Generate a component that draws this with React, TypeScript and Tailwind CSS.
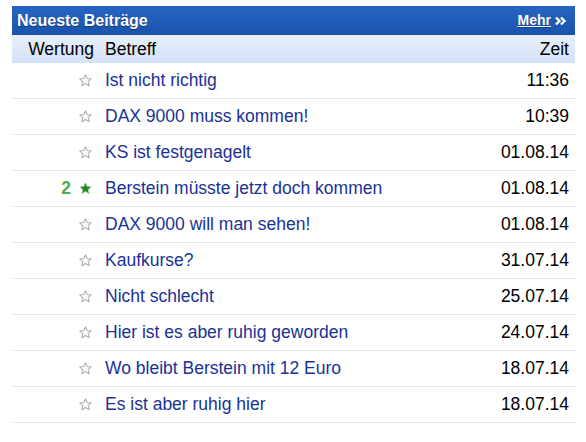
import React from "react";

const rows: { score?: string; title: string; time: string }[] = [
  { title: "Ist nicht richtig", time: "11:36" },
  { title: "DAX 9000 muss kommen!", time: "10:39" },
  { title: "KS ist festgenagelt", time: "01.08.14" },
  { score: "2", title: "Berstein müsste jetzt doch kommen", time: "01.08.14" },
  { title: "DAX 9000 will man sehen!", time: "01.08.14" },
  { title: "Kaufkurse?", time: "31.07.14" },
  { title: "Nicht schlecht", time: "25.07.14" },
  { title: "Hier ist es aber ruhig geworden", time: "24.07.14" },
  { title: "Wo bleibt Berstein mit 12 Euro", time: "18.07.14" },
  { title: "Es ist aber ruhig hier", time: "18.07.14" },
];

const STAR = "M6 0.7 L7.6 4.1 L11.3 4.5 L8.5 7 L9.4 10.8 L6 8.8 L2.6 10.8 L3.5 7 L0.7 4.5 L4.4 4.1 Z";

function Star({ filled }: { filled?: boolean }) {
  return (
    <svg width="13" height="13" viewBox="0 0 12 12" className="shrink-0">
      {filled ? (
        <path d={STAR} fill="#2a7d2a" stroke="#9ad69a" strokeWidth="0.9" strokeLinejoin="round" />
      ) : (
        <path d={STAR} fill="#fbfbfb" stroke="#b3b3b3" strokeWidth="1" strokeLinejoin="round" />
      )}
    </svg>
  );
}

export default function App() {
  return (
    <div className="w-[586px] h-[442px] bg-white pt-[6px] pl-[12px]" style={{ fontFamily: '"Liberation Sans", Arial, sans-serif' }}>
      <div className="w-[563px]">
        <div className="h-[29px] flex items-center justify-between pl-[5px] pr-[8px] bg-gradient-to-b from-[#2565c4] to-[#1b53ab]">
          <span className="text-white font-bold text-[16px] [text-shadow:0_1px_1px_rgba(0,0,0,0.4)]">Neueste Beiträge</span>
          <span className="flex items-center gap-[4px] text-white font-bold text-[14px]">
            <span className="underline [text-shadow:0_1px_1px_rgba(0,0,0,0.3)]">Mehr</span>
            <svg width="12" height="10" viewBox="0 0 12 10">
              <path d="M1 1.5 L4.5 5 L1 8.5 M6 1.5 L9.5 5 L6 8.5" fill="none" stroke="white" strokeWidth="2.4" />
            </svg>
          </span>
        </div>
        <div className="h-[28px] flex items-center text-[17.5px] text-black bg-gradient-to-b from-[#e8f0fc] to-[#d3e1f6]">
          <div className="w-[93px] pr-[11px] text-right">Wertung</div>
          <div className="flex-1">Betreff</div>
          <div className="pr-[6px]">Zeit</div>
        </div>
        {rows.map((r, i) => (
          <div key={i} className="h-[36px] flex items-center border-b border-[#e6e6e6] text-[17.5px]">
            <div className="w-[93px] pr-[13px] flex items-center justify-end gap-[8px]">
              {r.score && <span className="text-[#4cae4c] font-bold">{r.score}</span>}
              <Star filled={!!r.score} />
            </div>
            <div className="flex-1 text-[#1a3296]">{r.title}</div>
            <div className="pr-[6px] text-black">{r.time}</div>
          </div>
        ))}
      </div>
    </div>
  );
}
